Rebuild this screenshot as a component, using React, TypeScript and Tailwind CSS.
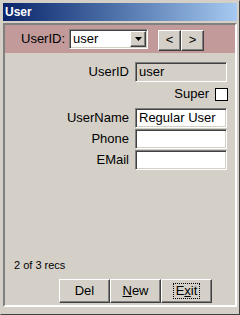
import React from "react";

const raised =
  "border border-t-white border-l-white border-r-[#404040] border-b-[#404040] shadow-[inset_-1px_-1px_0_#808080]";
const sunken =
  "border border-t-[#808080] border-l-[#808080] border-r-white border-b-white shadow-[inset_1px_1px_0_#404040,inset_-1px_-1px_0_#d4d0c8]";

function Field({ label, value, grey }: { label: string; value?: string; grey?: boolean }) {
  return (
    <div className="flex items-center">
      <div className="w-[126px] text-right pr-[2px]">{label}</div>
      <div
        className={`ml-[4px] w-[92px] h-[20px] flex items-center px-[3px] ${sunken} ${
          grey ? "bg-[#d4d0c8]" : "bg-white"
        }`}
      >
        {value}
      </div>
    </div>
  );
}

export default function App() {
  return (
    <div
      className="w-[240px] h-[315px] bg-[#d4d0c8] flex flex-col p-[2px] border border-t-[#d4d0c8] border-l-[#d4d0c8] border-r-[#404040] border-b-[#404040] text-[13px] text-black"
      style={{ fontFamily: '"Liberation Sans", Arial, sans-serif' }}
    >
      {/* Title bar */}
      <div className="h-[18px] bg-gradient-to-r from-[#0a246a] to-[#a6caf0] flex items-center px-[2px]">
        <span className="text-white font-bold text-[12px]">User</span>
      </div>

      {/* Main panel */}
      <div className="mt-[2px] mb-[5px] flex-1 flex flex-col border-2 border-t-[#808080] border-l-[#808080] border-b-white border-r-white">
        {/* Header */}
        <div className="h-[28px] bg-[#c29a9a] flex items-center pl-[16px]">
          <span>UserID:</span>
          <div className={`ml-[4px] w-[79px] h-[20px] bg-white flex items-center pl-[3px] ${sunken}`}>
            <span className="flex-1">user</span>
            <div className={`w-[16px] h-[16px] mr-px bg-[#d4d0c8] flex items-center justify-center ${raised}`}>
              <svg width="7" height="4" viewBox="0 0 7 4">
                <path d="M0 0h7L3.5 4z" fill="black" />
              </svg>
            </div>
          </div>
          <div className="ml-[10px] flex mt-[2px]">
            <button className={`w-[23px] h-[21px] bg-[#d4d0c8] flex items-center justify-center ${raised}`}>
              &lt;
            </button>
            <button className={`w-[23px] h-[21px] bg-[#d4d0c8] flex items-center justify-center ${raised}`}>
              &gt;
            </button>
          </div>
        </div>

        {/* Form */}
        <div className="flex flex-col pt-[9px]">
          <Field label="UserID" value="user" grey />
          <div className="flex items-center justify-end pr-[7px] mt-[4px] h-[16px]">
            <span>Super</span>
            <div className="ml-[6px] w-[13px] h-[13px] bg-white border border-black" />
          </div>
          <div className="flex flex-col gap-px mt-[6px]">
            <Field label="UserName" value="Regular User" />
            <Field label="Phone" />
            <Field label="EMail" />
          </div>
        </div>

        {/* Footer */}
        <div className="mt-auto flex flex-col pb-[2px]">
          <div className="pl-[9px] text-[11px]">2 of 3 recs</div>
          <div className="flex pl-[54px] mt-[6px]">
            <button className={`w-[51px] h-[24px] bg-[#d4d0c8] flex items-center justify-center ${raised}`}>
              Del
            </button>
            <button className={`w-[51px] h-[24px] bg-[#d4d0c8] flex items-center justify-center ${raised}`}>
              <span>
                <span className="underline">N</span>ew
              </span>
            </button>
            <button className={`w-[51px] h-[24px] bg-[#d4d0c8] flex items-center justify-center ${raised}`}>
              <span className="border border-dotted border-black px-[2px] leading-[14px]">
                E<span className="underline">x</span>it
              </span>
            </button>
          </div>
        </div>
      </div>
    </div>
  );
}
